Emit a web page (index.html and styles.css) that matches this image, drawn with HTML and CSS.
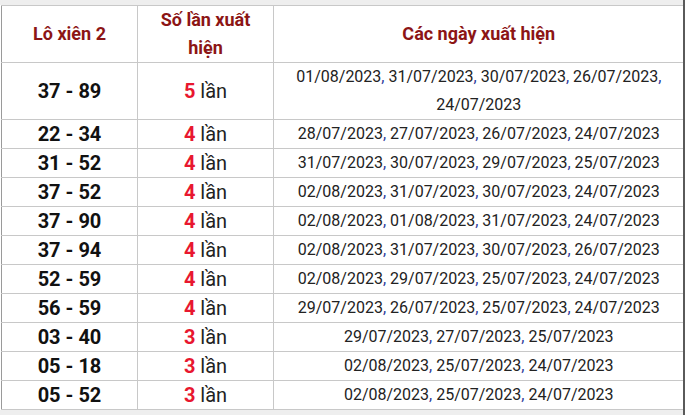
FILE: index.html
```html
<!DOCTYPE html>
<html lang="vi">
<head>
<meta charset="utf-8">
<title>Lô xiên 2</title>
<link rel="stylesheet" href="styles.css">
</head>
<body>
<div class="frame">
  <div class="strip"></div>
  <table class="stats">
    <colgroup><col class="c1"><col class="c2"><col class="c3"></colgroup>
    <thead>
      <tr><th>Lô xiên 2</th><th>Số lần xuất<br>hiện</th><th>Các ngày xuất hiện</th></tr>
    </thead>
    <tbody>
      <tr><td class="pair">37 - 89</td><td class="cnt"><b>5</b> lần</td><td class="dates">01/08/2023<i>,</i> 31/07/2023<i>,</i> 30/07/2023<i>,</i> 26/07/2023<i>,</i> 24/07/2023</td></tr>
      <tr><td class="pair">22 - 34</td><td class="cnt"><b>4</b> lần</td><td class="dates">28/07/2023<i>,</i> 27/07/2023<i>,</i> 26/07/2023<i>,</i> 24/07/2023</td></tr>
      <tr><td class="pair">31 - 52</td><td class="cnt"><b>4</b> lần</td><td class="dates">31/07/2023<i>,</i> 30/07/2023<i>,</i> 29/07/2023<i>,</i> 25/07/2023</td></tr>
      <tr><td class="pair">37 - 52</td><td class="cnt"><b>4</b> lần</td><td class="dates">02/08/2023<i>,</i> 31/07/2023<i>,</i> 30/07/2023<i>,</i> 24/07/2023</td></tr>
      <tr><td class="pair">37 - 90</td><td class="cnt"><b>4</b> lần</td><td class="dates">02/08/2023<i>,</i> 01/08/2023<i>,</i> 31/07/2023<i>,</i> 24/07/2023</td></tr>
      <tr><td class="pair">37 - 94</td><td class="cnt"><b>4</b> lần</td><td class="dates">02/08/2023<i>,</i> 31/07/2023<i>,</i> 30/07/2023<i>,</i> 26/07/2023</td></tr>
      <tr><td class="pair">52 - 59</td><td class="cnt"><b>4</b> lần</td><td class="dates">02/08/2023<i>,</i> 29/07/2023<i>,</i> 25/07/2023<i>,</i> 24/07/2023</td></tr>
      <tr><td class="pair">56 - 59</td><td class="cnt"><b>4</b> lần</td><td class="dates">29/07/2023<i>,</i> 26/07/2023<i>,</i> 25/07/2023<i>,</i> 24/07/2023</td></tr>
      <tr><td class="pair">03 - 40</td><td class="cnt"><b>3</b> lần</td><td class="dates">29/07/2023<i>,</i> 27/07/2023<i>,</i> 25/07/2023</td></tr>
      <tr><td class="pair">05 - 18</td><td class="cnt"><b>3</b> lần</td><td class="dates">02/08/2023<i>,</i> 25/07/2023<i>,</i> 24/07/2023</td></tr>
      <tr><td class="pair">05 - 52</td><td class="cnt"><b>3</b> lần</td><td class="dates">02/08/2023<i>,</i> 25/07/2023<i>,</i> 24/07/2023</td></tr>
    </tbody>
  </table>
  <div class="strip bottom"></div>
</div>
</body>
</html>
```
FILE: styles.css
```css
html, body {
  margin: 0;
  padding: 0;
  background: #ffffff;
}
body {
  font-family: Roboto, "Liberation Sans", Arial, sans-serif;
  color: #222;
}
.frame {
  width: 683px;
  height: 415px;
  border-right: 2px solid #5a5a5a;
  background: #ffffff;
  overflow: hidden;
}
.strip {
  height: 5px;
  background: #eeeeee;
}
.strip.bottom {
  height: 6px;
}
.stats {
  border-collapse: collapse;
  table-layout: fixed;
  width: 682px;
  margin-left: 1px;
}
.c1 { width: 136px; }
.c2 { width: 136px; }
.c3 { width: 410px; }
.stats th,
.stats td {
  border: 1px solid #c8c8c8;
  padding: 0 4px;
  line-height: 28px;
  text-align: center;
  vertical-align: middle;
}
.stats tr > :first-child {
  border-left-color: #9a9a9a;
}
.stats tr > :last-child {
  border-right: none;
}
.stats th {
  font-size: 18px;
  font-weight: 700;
  color: #8c1515;
}
.pair {
  font-size: 20px;
  font-weight: 700;
  color: #111;
}
.cnt {
  font-size: 20px;
  color: #222;
}
.cnt b {
  color: #e8172f;
  font-weight: 700;
}
.dates {
  font-size: 16px;
  color: #222;
}
.dates i {
  font-style: normal;
  color: #2d3a9a;
}
```
